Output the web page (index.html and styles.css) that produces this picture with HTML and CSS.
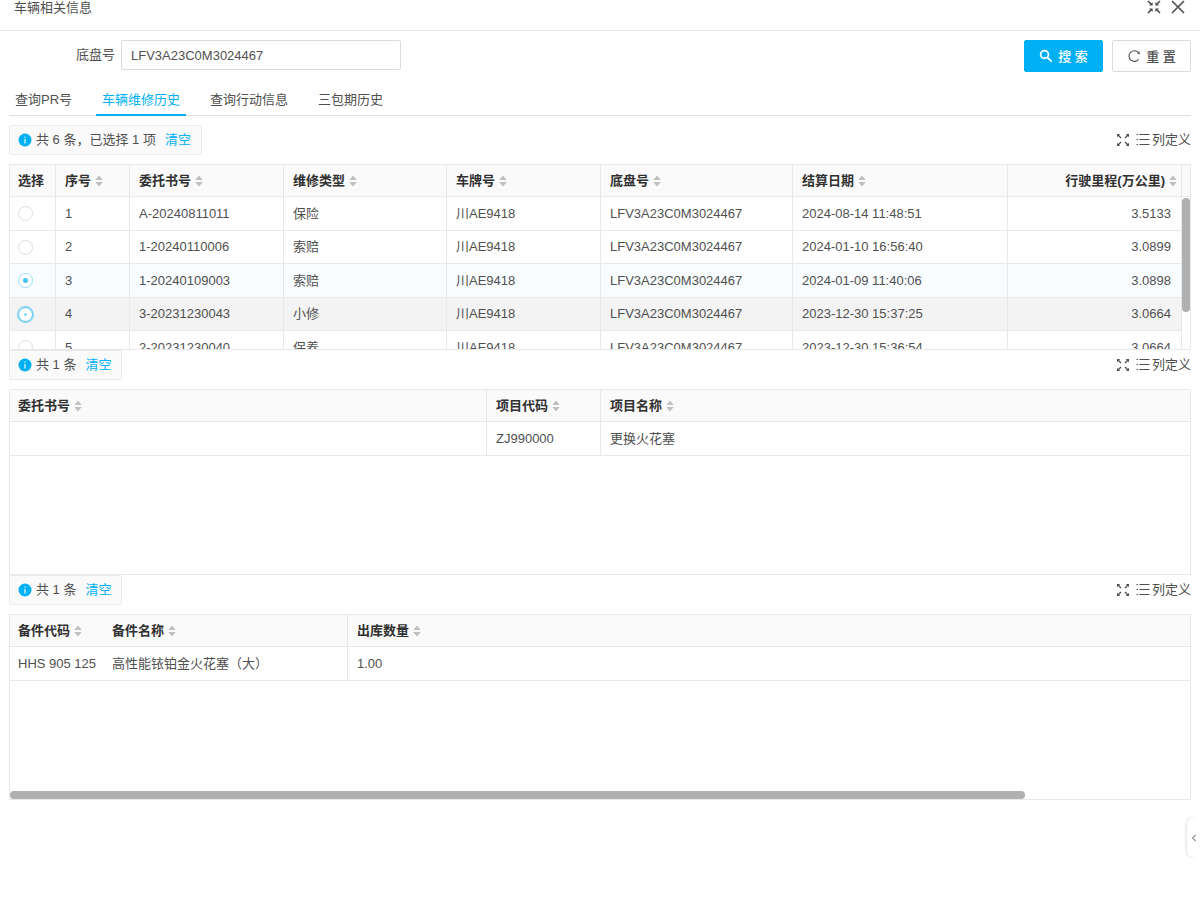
FILE: index.html
```html
<!DOCTYPE html>
<html lang="zh-CN">
<head>
<meta charset="utf-8">
<title>车辆相关信息</title>
<link rel="stylesheet" href="styles.css">
</head>
<body>
<svg class="defs" aria-hidden="true">
  <symbol id="i-shrink" viewBox="0 0 14 14">
    <g fill="none" stroke="currentColor" stroke-width="1.600"><path d="M1 1l3.600 3.600M13 1L9.400 4.600M1 13l3.600-3.600M13 13L9.400 9.400"/></g>
    <path fill="currentColor" d="M5.600 2v3.600H2zM8.400 2v3.600H12zM5.600 12V8.400H2zM8.400 12V8.400H12z"/>
  </symbol>
  <symbol id="i-expand" viewBox="0 0 14 14">
    <g fill="none" stroke="currentColor" stroke-width="1.300"><path d="M2 2l3 3M12 2L9 5M2 12l3-3M12 12L9 9"/></g>
    <path fill="currentColor" d="M1 1h3.200L1 4.200zM13 1H9.800L13 4.200zM1 13h3.200L1 9.800zM13 13H9.800L13 9.800z"/>
  </symbol>
  <symbol id="i-list" viewBox="0 0 14 14">
    <path fill="none" stroke="currentColor" d="M3.500 1.500h10M3.500 6.500h10M3.500 11.500h10M.5 1.500H2M.5 6.500H2M.5 11.500H2"/>
  </symbol>
  <symbol id="i-info" viewBox="0 0 14 14">
    <circle cx="7" cy="7" r="6.500" fill="#00b0f5"/><path d="M7 6v4.500M7 3.500v1.300" stroke="#fff" stroke-width="1.100"/>
  </symbol>
  <symbol id="i-sort" viewBox="0 0 8 12">
    <path fill="#bfbfbf" d="M4 .5L7.700 5H.3zM4 11.500L.3 7h7.400z"/>
  </symbol>
</svg>

<header class="head">
  <h1 class="head-title">车辆相关信息</h1>
  <div class="head-tools">
    <button class="icon-btn" type="button" aria-label="还原"><svg class="ico"><use href="#i-shrink"/></svg></button>
    <button class="icon-btn" type="button" aria-label="关闭"><svg class="ico" viewBox="0 0 14 14"><path d="M1 1l12 12M13 1L1 13" fill="none" stroke="currentColor" stroke-width="1.700"/></svg></button>
  </div>
</header>

<main class="page">
  <form class="search">
    <label class="search-label" for="vin">底盘号</label>
    <input class="search-input" id="vin" type="text" value="LFV3A23C0M3024467">
    <div class="search-actions">
      <button class="btn btn-primary" type="button"><svg class="ico" viewBox="0 0 14 14"><g fill="none" stroke="currentColor" stroke-width="1.700"><circle cx="5.500" cy="5.500" r="3.900"/><path d="M8.300 8.300l4.400 4.400"/></g></svg><span class="btn-text">搜 索</span></button>
      <button class="btn" type="button"><svg class="ico" viewBox="0 0 14 14"><path d="M11.600 10.200A5.300 5.300 0 1 1 11.400 3.700" fill="none" stroke="currentColor" stroke-width="1.100"/><path d="M12.700 2.300v2.900l-2.700-.4z" fill="currentColor"/></svg><span class="btn-text">重 置</span></button>
    </div>
  </form>

  <nav class="tabs" role="tablist">
    <button class="tab" type="button" role="tab">查询PR号</button>
    <button class="tab tab-active" type="button" role="tab" aria-selected="true">车辆维修历史</button>
    <button class="tab" type="button" role="tab">查询行动信息</button>
    <button class="tab" type="button" role="tab">三包期历史</button>
  </nav>

  <section class="block">
    <div class="bar">
      <div class="chip"><svg class="ico"><use href="#i-info"/></svg><span>共 6 条，已选择 1 项</span><a class="clear" href="#">清空</a></div>
      <div class="bar-tools">
        <button class="icon-btn" type="button" aria-label="全屏"><svg class="ico"><use href="#i-expand"/></svg></button>
        <button class="icon-btn" type="button"><svg class="ico"><use href="#i-list"/></svg>列定义</button>
      </div>
    </div>
    <div class="grid grid-split">
      <table class="table">
        <colgroup><col class="c-pick"><col class="c-seq"><col class="c-order"><col class="c-type"><col class="c-plate"><col class="c-vin"><col class="c-date"><col></colgroup>
        <thead><tr>
          <th>选择</th>
          <th>序号<svg class="sort"><use href="#i-sort"/></svg></th>
          <th>委托书号<svg class="sort"><use href="#i-sort"/></svg></th>
          <th>维修类型<svg class="sort"><use href="#i-sort"/></svg></th>
          <th>车牌号<svg class="sort"><use href="#i-sort"/></svg></th>
          <th>底盘号<svg class="sort"><use href="#i-sort"/></svg></th>
          <th>结算日期<svg class="sort"><use href="#i-sort"/></svg></th>
          <th class="num num-head">行驶里程(万公里)<svg class="sort"><use href="#i-sort"/></svg></th>
        </tr></thead>
        <tbody>
          <tr><td><input class="radio" type="radio" name="row" aria-label="1"></td><td>1</td><td>A-20240811011</td><td>保险</td><td>川AE9418</td><td>LFV3A23C0M3024467</td><td>2024-08-14 11:48:51</td><td class="num">3.5133</td></tr>
          <tr><td><input class="radio" type="radio" name="row" aria-label="2"></td><td>2</td><td>1-20240110006</td><td>索赔</td><td>川AE9418</td><td>LFV3A23C0M3024467</td><td>2024-01-10 16:56:40</td><td class="num">3.0899</td></tr>
          <tr class="row-picked"><td><input class="radio" type="radio" name="row" aria-label="3" checked></td><td>3</td><td>1-20240109003</td><td>索赔</td><td>川AE9418</td><td>LFV3A23C0M3024467</td><td>2024-01-09 11:40:06</td><td class="num">3.0898</td></tr>
          <tr class="row-hover"><td><input class="radio radio-focus" type="radio" name="row" aria-label="4"></td><td>4</td><td>3-20231230043</td><td>小修</td><td>川AE9418</td><td>LFV3A23C0M3024467</td><td>2023-12-30 15:37:25</td><td class="num">3.0664</td></tr>
          <tr><td><input class="radio" type="radio" name="row" aria-label="5"></td><td>5</td><td>2-20231230040</td><td>保养</td><td>川AE9418</td><td>LFV3A23C0M3024467</td><td>2023-12-30 15:36:54</td><td class="num">3.0664</td></tr>
        </tbody>
      </table>
      <div class="gutter"><div class="gutter-head"></div><div class="thumb-v"></div></div>
    </div>
  </section>

  <section class="block">
    <div class="bar">
      <div class="chip"><svg class="ico"><use href="#i-info"/></svg><span>共 1 条</span><a class="clear" href="#">清空</a></div>
      <div class="bar-tools">
        <button class="icon-btn" type="button" aria-label="全屏"><svg class="ico"><use href="#i-expand"/></svg></button>
        <button class="icon-btn" type="button"><svg class="ico"><use href="#i-list"/></svg>列定义</button>
      </div>
    </div>
    <div class="grid">
      <table class="table table-wide">
        <colgroup><col class="c-item-order"><col class="c-item-code"><col></colgroup>
        <thead><tr>
          <th>委托书号<svg class="sort"><use href="#i-sort"/></svg></th>
          <th>项目代码<svg class="sort"><use href="#i-sort"/></svg></th>
          <th>项目名称<svg class="sort"><use href="#i-sort"/></svg></th>
        </tr></thead>
        <tbody><tr><td></td><td>ZJ990000</td><td>更换火花塞</td></tr></tbody>
      </table>
    </div>
  </section>

  <section class="block">
    <div class="bar">
      <div class="chip"><svg class="ico"><use href="#i-info"/></svg><span>共 1 条</span><a class="clear" href="#">清空</a></div>
      <div class="bar-tools">
        <button class="icon-btn" type="button" aria-label="全屏"><svg class="ico"><use href="#i-expand"/></svg></button>
        <button class="icon-btn" type="button"><svg class="ico"><use href="#i-list"/></svg>列定义</button>
      </div>
    </div>
    <div class="grid">
      <table class="table table-wide">
        <colgroup><col class="c-part-code"><col class="c-part-name"><col></colgroup>
        <thead><tr>
          <th class="open">备件代码<svg class="sort"><use href="#i-sort"/></svg></th>
          <th>备件名称<svg class="sort"><use href="#i-sort"/></svg></th>
          <th>出库数量<svg class="sort"><use href="#i-sort"/></svg></th>
        </tr></thead>
        <tbody><tr><td class="open">HHS 905 125</td><td>高性能铱铂金火花塞（大）</td><td>1.00</td></tr></tbody>
      </table>
      <div class="thumb-h"></div>
    </div>
  </section>
</main>

<button class="drawer" type="button" aria-label="展开"><svg viewBox="0 0 6 8"><path d="M4.800 1L1.500 4l3.300 3" fill="none" stroke="currentColor" stroke-width="1.400"/></svg></button>
</body>
</html>
```

FILE: styles.css
```css
* { box-sizing: border-box; }

body {
  margin: 0;
  background: #fff;
  color: #505050;
  font: 13px/20px "Liberation Sans", "Noto Sans CJK SC", sans-serif;
}

button, input { font: inherit; color: inherit; margin: 0; }
button { cursor: pointer; }

.defs { position: absolute; width: 0; height: 0; }
.ico { width: 14px; height: 14px; flex: none; }

.head {
  display: flex;
  justify-content: space-between;
  align-items: flex-start;
  height: 31px;
  padding: 0 15px 0 14px;
  border-bottom: 1px solid #e4e4e4;
}
.head-title { margin: 0; font-size: 13px; font-weight: 400; line-height: 16px; }
.head-tools { display: flex; gap: 10px; }

.icon-btn {
  display: flex;
  align-items: center;
  gap: 2px;
  padding: 0;
  border: 0;
  background: none;
}

.page { padding: 9px 9px 0; }

.search { display: flex; align-items: flex-start; height: 45px; }
.search-label { width: 112px; padding-right: 6px; line-height: 30px; text-align: right; }
.search-input {
  width: 280px;
  height: 30px;
  padding: 0 9px;
  border: 1px solid #dcdcdc;
  border-radius: 2px;
  background: #fff;
}
.search-actions { display: flex; gap: 9px; margin-left: auto; }

.btn {
  display: flex;
  align-items: center;
  justify-content: center;
  gap: 5px;
  width: 79px;
  height: 32px;
  padding: 0;
  border: 1px solid #dcdcdc;
  border-radius: 2px;
  background: #fff;
  font-weight: 500;
}
.btn-text { padding-top: 1px; }
.btn-primary { border-color: #00b0f5; background: #00b0f5; color: #fff; }

.tabs { display: flex; gap: 18px; height: 31px; border-bottom: 1px solid #e0e0e0; }
.tab {
  height: 31px;
  padding: 0 6px;
  border: 0;
  border-bottom: 2px solid transparent;
  background: none;
}
.tab-active { border-color: #00b0f5; color: #00b0f5; }

.block { margin-top: 9px; }
.block + .block { margin-top: 0; }

.bar { display: flex; justify-content: space-between; height: 30px; margin-bottom: 9px; }
.chip {
  display: flex;
  align-items: center;
  gap: 4px;
  padding: 0 10px 0 8px;
  border: 1px solid #ebebeb;
  border-radius: 2px;
  background: #fafafa;
}
.clear { margin-left: 5px; color: #00b0f5; text-decoration: none; }
.bar-tools { display: flex; gap: 6px; }

.grid {
  display: flex;
  flex-direction: column;
  height: 186px;
  overflow: hidden;
  border: 1px solid #e8e8e8;
}
.grid-split { flex-direction: row; align-items: flex-start; }

.table {
  flex: 1;
  width: 100%;
  table-layout: fixed;
  border-collapse: separate;
  border-spacing: 0;
}
.table-wide { flex: none; }
.table th, .table td {
  height: 33px;
  padding: 0 9px;
  border-right: 1px solid #e8e8e8;
  border-bottom: 1px solid #e8e8e8;
  text-align: left;
  white-space: nowrap;
}
.table th { height: 32px; background: #fafafa; color: #303030; font-weight: 700; }
.table th:first-child, .table td:first-child { padding-left: 8px; }
.table tbody tr:nth-child(odd) td { height: 34px; }
.table-wide th:last-child, .table-wide td:last-child { border-right: 0; }
.table .open { border-right: 0; }
.table .num { text-align: right; padding-right: 10px; }
.table .num-head { padding-right: 4px; }
.row-picked { background: #f8fcff; }
.row-hover { background: #f3f3f3; }

.c-pick { width: 46px; }
.c-seq { width: 74px; }
.c-order, .c-plate { width: 154px; }
.c-type { width: 163px; }
.c-vin { width: 192px; }
.c-date { width: 215px; }
.c-item-order { width: 477px; }
.c-item-code { width: 114px; }
.c-part-code { width: 93px; }
.c-part-name { width: 245px; }

.sort { width: 8px; height: 12px; margin-left: 4px; vertical-align: -2px; }

.radio {
  display: block;
  width: 15px;
  height: 15px;
  appearance: none;
  border: 1px solid #dedede;
  border-radius: 50%;
  background: #fff;
}
.radio:checked {
  border-color: #9edcf3;
  background: radial-gradient(circle, #45c4f5 2px, #fff 3px);
}
.radio-focus {
  border-color: #4cc3f0;
  background: radial-gradient(circle, #8fdcf8 1px, #fff 2px);
  box-shadow: 0 0 0 1px #85d6f5;
}

.gutter { width: 8px; }
.gutter-head { height: 32px; border-bottom: 1px solid #e8e8e8; background: #fafafa; }
.thumb-v { height: 114px; margin-top: 1px; border-radius: 4px; background: #b0b0b0; }
.thumb-h { width: 86%; height: 8px; margin-top: auto; border-radius: 4px; background: #b0b0b0; }

.drawer {
  position: absolute;
  top: 818px;
  right: 3px;
  width: 10px;
  height: 39px;
  padding: 0;
  border: 0;
  border-radius: 6px 0 0 6px;
  background: #fff;
  box-shadow: -1px 0 3px #e0e0e0;
  clip-path: inset(-4px 0 -4px -6px);
  color: #a0a0a0;
}
.drawer svg { display: block; width: 6px; height: 8px; margin-left: 4px; }
```
